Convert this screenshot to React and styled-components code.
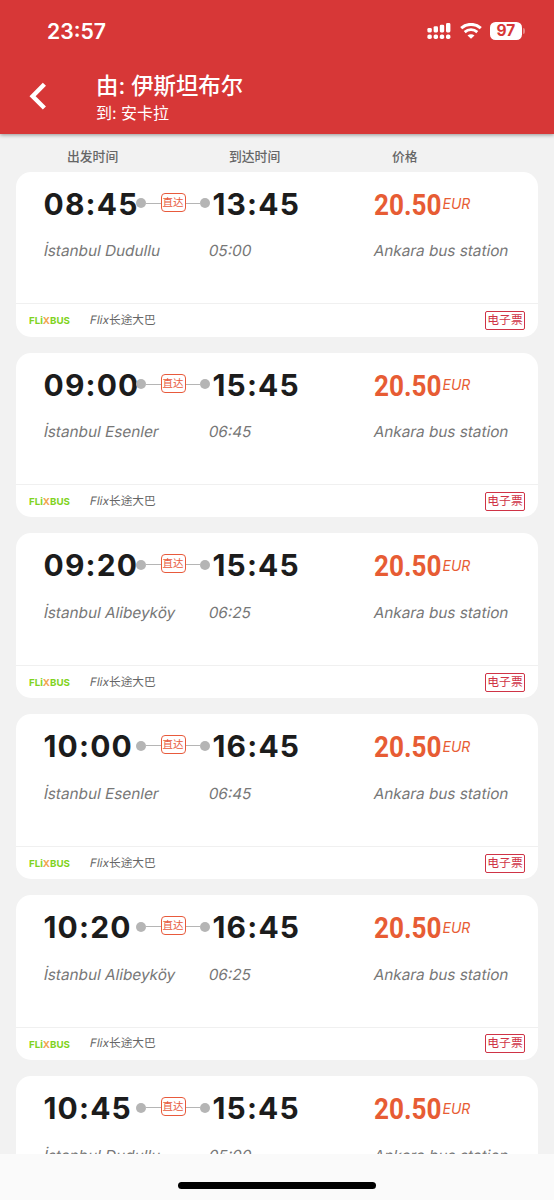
import React from 'react';
import styled, { createGlobalStyle } from 'styled-components';

const trips = [
  { departure: '08:45', arrival: '13:45', from: 'İstanbul Dudullu', duration: '05:00' },
  { departure: '09:00', arrival: '15:45', from: 'İstanbul Esenler', duration: '06:45' },
  { departure: '09:20', arrival: '15:45', from: 'İstanbul Alibeyköy', duration: '06:25' },
  { departure: '10:00', arrival: '16:45', from: 'İstanbul Esenler', duration: '06:45' },
  { departure: '10:20', arrival: '16:45', from: 'İstanbul Alibeyköy', duration: '06:25' },
  { departure: '10:45', arrival: '15:45', from: 'İstanbul Dudullu', duration: '05:00' },
];

function SignalIcon() {
  return (
    <svg width='24' height='18' viewBox='0 0 24 18' fill='#fff'>
      {[0, 1, 2, 3].map(i => (
        <g key={i}>
          <rect x={0.4 + i * 6.2} y={5.9 - i * 1.6} width='4.4' height={4.5 + i * 1.6} rx='1.3' />
          <rect x={0.4 + i * 6.2} y='12.4' width='4.4' height='4.6' rx='1.7' />
        </g>
      ))}
    </svg>
  );
}

function WifiIcon() {
  return (
    <svg width='22' height='16' viewBox='0 0 22 16' fill='none' stroke='#fff'>
      <path d='M1.2 5.2C6.7.1 15.3.1 20.8 5.2' strokeWidth='3' />
      <path d='M4.7 9.1c3.6-3.3 9-3.3 12.6 0' strokeWidth='2.8' />
      <path d='M11 15.8 7.5 12.5c2-1.8 5-1.8 7 0z' fill='#fff' stroke='none' />
    </svg>
  );
}

function BackIcon() {
  return (
    <svg width='18' height='28' viewBox='0 0 18 28' fill='none' stroke='#fff' strokeWidth='4.4'>
      <path d='M15.4 2.2 3.6 14.3 15.4 26' />
    </svg>
  );
}

function FlixbusLogo() {
  return (
    <svg width='42' height='10' viewBox='0 0 42 10'>
      <LogoText x='0' y='8.6' textLength='41' lengthAdjust='spacingAndGlyphs'>
        FL<tspan>i</tspan>
        <tspan fill='#f2a552'>X</tspan>BUS
      </LogoText>
    </svg>
  );
}

function TripCard({ trip }) {
  return (
    <Card>
      <Times>
        <Time>{trip.departure}</Time>
        <Route>
          <Dot />
          <Line />
          <DirectTag>直达</DirectTag>
          <Line />
          <Dot />
        </Route>
        <Time>{trip.arrival}</Time>
        <Price>
          <Amount>20.50</Amount>
          <Currency>EUR</Currency>
        </Price>
      </Times>
      <Stations>
        <Slanted>{trip.from}</Slanted>
        <Slanted>{trip.duration}</Slanted>
        <Slanted>Ankara bus station</Slanted>
      </Stations>
      <Operator>
        <FlixbusLogo />
        <OperatorName>
          <Slanted>Flix</Slanted>长途大巴
        </OperatorName>
        <TicketTag>电子票</TicketTag>
      </Operator>
    </Card>
  );
}

export default function App() {
  return (
    <Page>
      <GlobalStyle />
      <Header>
        <StatusBar>
          <Clock>23:57</Clock>
          <SignalIcon />
          <WifiIcon />
          <Battery>
            <BatteryLevel>97</BatteryLevel>
            <BatteryTip />
          </Battery>
        </StatusBar>
        <NavBar>
          <BackIcon />
          <div>
            <Origin>由: 伊斯坦布尔</Origin>
            <Destination>到: 安卡拉</Destination>
          </div>
        </NavBar>
      </Header>
      <Content>
        <Columns>
          <span>出发时间</span>
          <span>到达时间</span>
          <span>价格</span>
        </Columns>
        <List>
          {trips.map(trip => (
            <TripCard key={trip.departure} trip={trip} />
          ))}
        </List>
      </Content>
      <Footer>
        <HomeIndicator />
      </Footer>
    </Page>
  );
}

const GlobalStyle = createGlobalStyle`
  * {
    box-sizing: border-box;
  }
  body {
    margin: 0;
    font-family: Inter, 'Noto Sans CJK SC', sans-serif;
  }
  svg {
    display: block;
    flex: none;
  }
`;

const Page = styled.div`
  display: flex;
  flex-direction: column;
  height: 1200px;
  width: 554px;
  overflow: hidden;
  background: #f2f2f2;
`;

const Header = styled.header`
  flex: none;
  height: 134px;
  background: #d73737;
  color: #fff;
  box-shadow: 0 1px 4px rgba(0, 0, 0, 0.4);
  z-index: 1;
`;

const StatusBar = styled.div`
  display: flex;
  align-items: center;
  height: 61px;
  padding: 0 29px 0 47px;
  svg + svg {
    margin: 0 8px 0 9px;
  }
`;

const Clock = styled.div`
  flex: 1;
  font-size: 21.2px;
  font-weight: 580;
  line-height: 26px;
`;

const Battery = styled.div`
  display: flex;
  align-items: center;
`;

const BatteryLevel = styled.div`
  width: 32px;
  height: 18px;
  border-radius: 5.5px;
  background: #fff;
  color: #d73737;
  font-size: 15.5px;
  font-weight: 650;
  line-height: 18px;
  text-align: center;
`;

const BatteryTip = styled.div`
  width: 2px;
  height: 6px;
  margin-left: 1px;
  border-radius: 0 2px 2px 0;
  background: #e68484;
`;

const NavBar = styled.div`
  display: flex;
  align-items: flex-start;
  padding: 9px 0 0 29px;
  svg {
    margin: 12px 49px 0 0;
  }
`;

const Origin = styled.div`
  font-size: 22.4px;
  font-weight: 500;
  line-height: 31px;
`;

const Destination = styled.div`
  font-size: 16px;
  line-height: 24px;
`;

const Content = styled.main`
  flex: 1;
  min-height: 0;
  overflow: hidden;
`;

const Columns = styled.div`
  display: grid;
  grid-template-columns: 162px 163px 1fr;
  height: 37.7px;
  padding: 13px 0 0 67px;
  color: #666;
  font-size: 12.8px;
  font-weight: 500;
  line-height: 20px;
`;

const List = styled.div`
  display: flex;
  flex-direction: column;
  gap: 16px;
  padding: 0 16px;
`;

const Card = styled.section`
  flex: none;
  display: flex;
  flex-direction: column;
  height: 164.9px;
  border-radius: 15px;
  background: #fff;
`;

const Times = styled.div`
  display: grid;
  grid-template-columns: 93px 76px 161px 1fr;
  align-items: center;
  height: 64px;
  padding-left: 27.5px;
`;

const Time = styled.div`
  color: #1c1c1c;
  font-size: 30px;
  font-weight: 680;
  letter-spacing: 1.15px;
  line-height: 40px;
  white-space: nowrap;
`;

const Route = styled.div`
  display: flex;
  align-items: center;
  width: 74px;
  margin: -1px 0 0 -0.5px;
`;

const Dot = styled.div`
  width: 10px;
  height: 10px;
  border-radius: 50%;
  background: #b5b5b5;
`;

const Line = styled.div`
  flex: 1;
  height: 1px;
  background: #b5b5b5;
`;

const DirectTag = styled.div`
  width: 25px;
  height: 19px;
  margin-top: -2px;
  border: 1px solid #e85a3c;
  border-radius: 4px;
  color: #e85a3c;
  font-size: 10.5px;
  line-height: 17px;
  text-align: center;
`;

const Price = styled.div`
  display: flex;
  align-items: center;
`;

const Amount = styled.div`
  width: 69px;
  padding-top: 2px;
  color: #e75c34;
  font-family: Roboto, sans-serif;
  font-size: 29px;
  font-weight: 700;
  line-height: 40px;
  transform: scaleX(0.9);
  transform-origin: left;
`;

const Currency = styled.div`
  color: #e75c34;
  font-size: 14px;
  font-style: italic;
`;

const Stations = styled.div`
  display: grid;
  grid-template-columns: 165px 165px 1fr;
  justify-items: start;
  flex: 1;
  padding: 4.5px 0 0 27.5px;
  color: #777;
  font-size: 15.3px;
  letter-spacing: 0;
  line-height: 21px;
  white-space: nowrap;
`;

/* slants the upright letterforms instead of using the true italics */
const Slanted = styled.span`
  display: inline-block;
  height: 21px;
  transform: skewX(-11deg);
`;

const Operator = styled.div`
  display: flex;
  align-items: center;
  height: 33.5px;
  padding: 0 13px;
  border-top: 1px solid #f0f0f0;
`;

const LogoText = styled.text`
  fill: #7fd321;
  font-family: Inter, sans-serif;
  font-size: 9.6px;
  font-weight: 750;
`;

const OperatorName = styled.div`
  flex: 1;
  margin-left: 19px;
  color: #666;
  font-size: 11.7px;
  line-height: 21px;
`;

const TicketTag = styled.div`
  width: 40px;
  height: 19px;
  border: 1px solid #cf3346;
  border-radius: 2px;
  color: #cf3346;
  font-size: 11.8px;
  line-height: 17px;
  text-align: center;
`;

const Footer = styled.footer`
  flex: none;
  height: 46px;
  padding-top: 28px;
  background: #fafafa;
`;

const HomeIndicator = styled.div`
  width: 198px;
  height: 7px;
  margin: 0 auto;
  border-radius: 4px;
  background: #000;
`;
